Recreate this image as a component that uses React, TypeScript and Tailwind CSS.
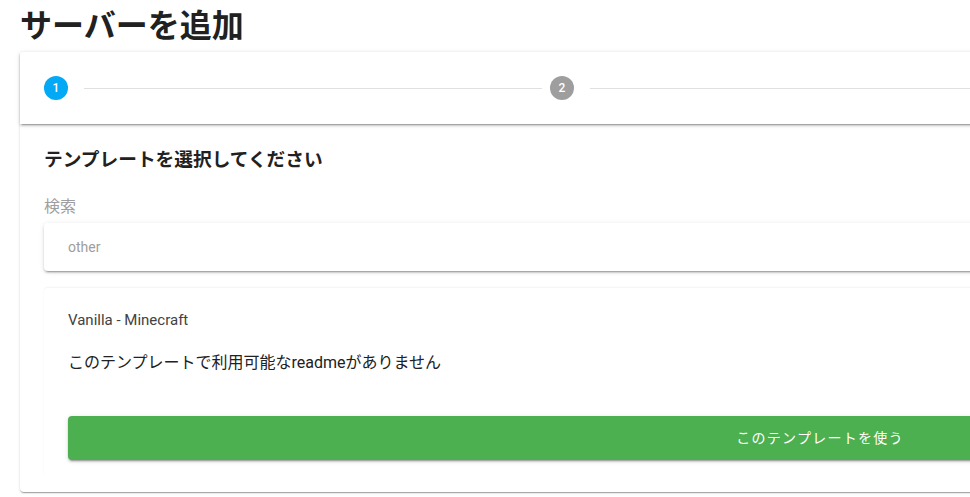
import React, { useState } from "react";

const jp = "font-['Roboto','Noto_Sans_CJK_JP',sans-serif]";

const Step = ({ n, active }: { n: number; active?: boolean }) => (
  <div className="flex items-center px-[24px] relative z-10">
    <span
      className={`flex h-6 w-6 items-center justify-center rounded-full text-[12px] font-medium text-white mr-2 ${
        active ? "bg-[#03a9f4]" : "bg-[#9e9e9e]"
      }`}
    >
      {n}
    </span>
  </div>
);

export default function App() {
  const [search, setSearch] = useState("");

  return (
    <div className={`w-[970px] h-[497px] overflow-hidden bg-white ${jp}`}>
      <div className="w-[1640px] px-[20px]">
        <h1 className="mt-[6px] text-[32px] leading-[40px] font-bold text-[#212121]">
          サーバーを追加
        </h1>

        <div className="mt-[6px] rounded-[4px] bg-white shadow-[0_2px_1px_-1px_rgba(0,0,0,0.2),0_1px_1px_0_rgba(0,0,0,0.14),0_1px_3px_0_rgba(0,0,0,0.12)]">
          <div className="flex h-[72px] items-center shadow-[0_3px_1px_-2px_rgba(0,0,0,0.2),0_2px_2px_0_rgba(0,0,0,0.14),0_1px_5px_0_rgba(0,0,0,0.12)]">
            <Step n={1} active />
            <div className="w-[458px] h-px bg-[#e0e0e0] mx-[-16px]" />
            <Step n={2} />
            <div className="flex-1 h-px bg-[#e0e0e0] ml-[-16px]" />
          </div>

          <div className="px-[24px] pt-[24px] pb-[16px]">
            <h3 className="text-[18.7px] leading-[24px] font-semibold text-[#212121]">
              テンプレートを選択してください
            </h3>
            <div className="mt-[23px] text-[16px] leading-[24px] text-[#9e9e9e]">検索</div>
            <div className="mt-[4px] h-[48px] flex items-center rounded-[4px] bg-white shadow-[0_3px_1px_-2px_rgba(0,0,0,0.2),0_2px_2px_0_rgba(0,0,0,0.14),0_1px_5px_0_rgba(0,0,0,0.12)]">
              <input
                className="w-full pl-[24px] text-[14px] text-[#212121] placeholder:text-[#9e9e9e] outline-none bg-transparent"
                placeholder="other"
                value={search}
                onChange={(e) => setSearch(e.target.value)}
              />
            </div>

            <div className="mt-[17px] rounded-[4px] bg-white px-[24px] pt-[22px] pb-[16px] shadow-[0_-1px_2px_0_rgba(0,0,0,0.05)]">
              <div className="text-[15px] leading-[20px] text-[#424242]">Vanilla - Minecraft</div>
              <p className="mt-[21px] text-[16px] leading-[24px] text-[#212121]">
                このテンプレートで利用可能なreadmeがありません
              </p>
              <button className="mt-[41px] flex h-[44px] w-full items-center justify-center rounded-[4px] bg-[#4caf50] text-[14px] tracking-[0.0892em] text-white shadow-[0_3px_1px_-2px_rgba(0,0,0,0.2),0_2px_2px_0_rgba(0,0,0,0.14),0_1px_5px_0_rgba(0,0,0,0.12)]">
                このテンプレートを使う
              </button>
            </div>
          </div>
        </div>
      </div>
    </div>
  );
}
